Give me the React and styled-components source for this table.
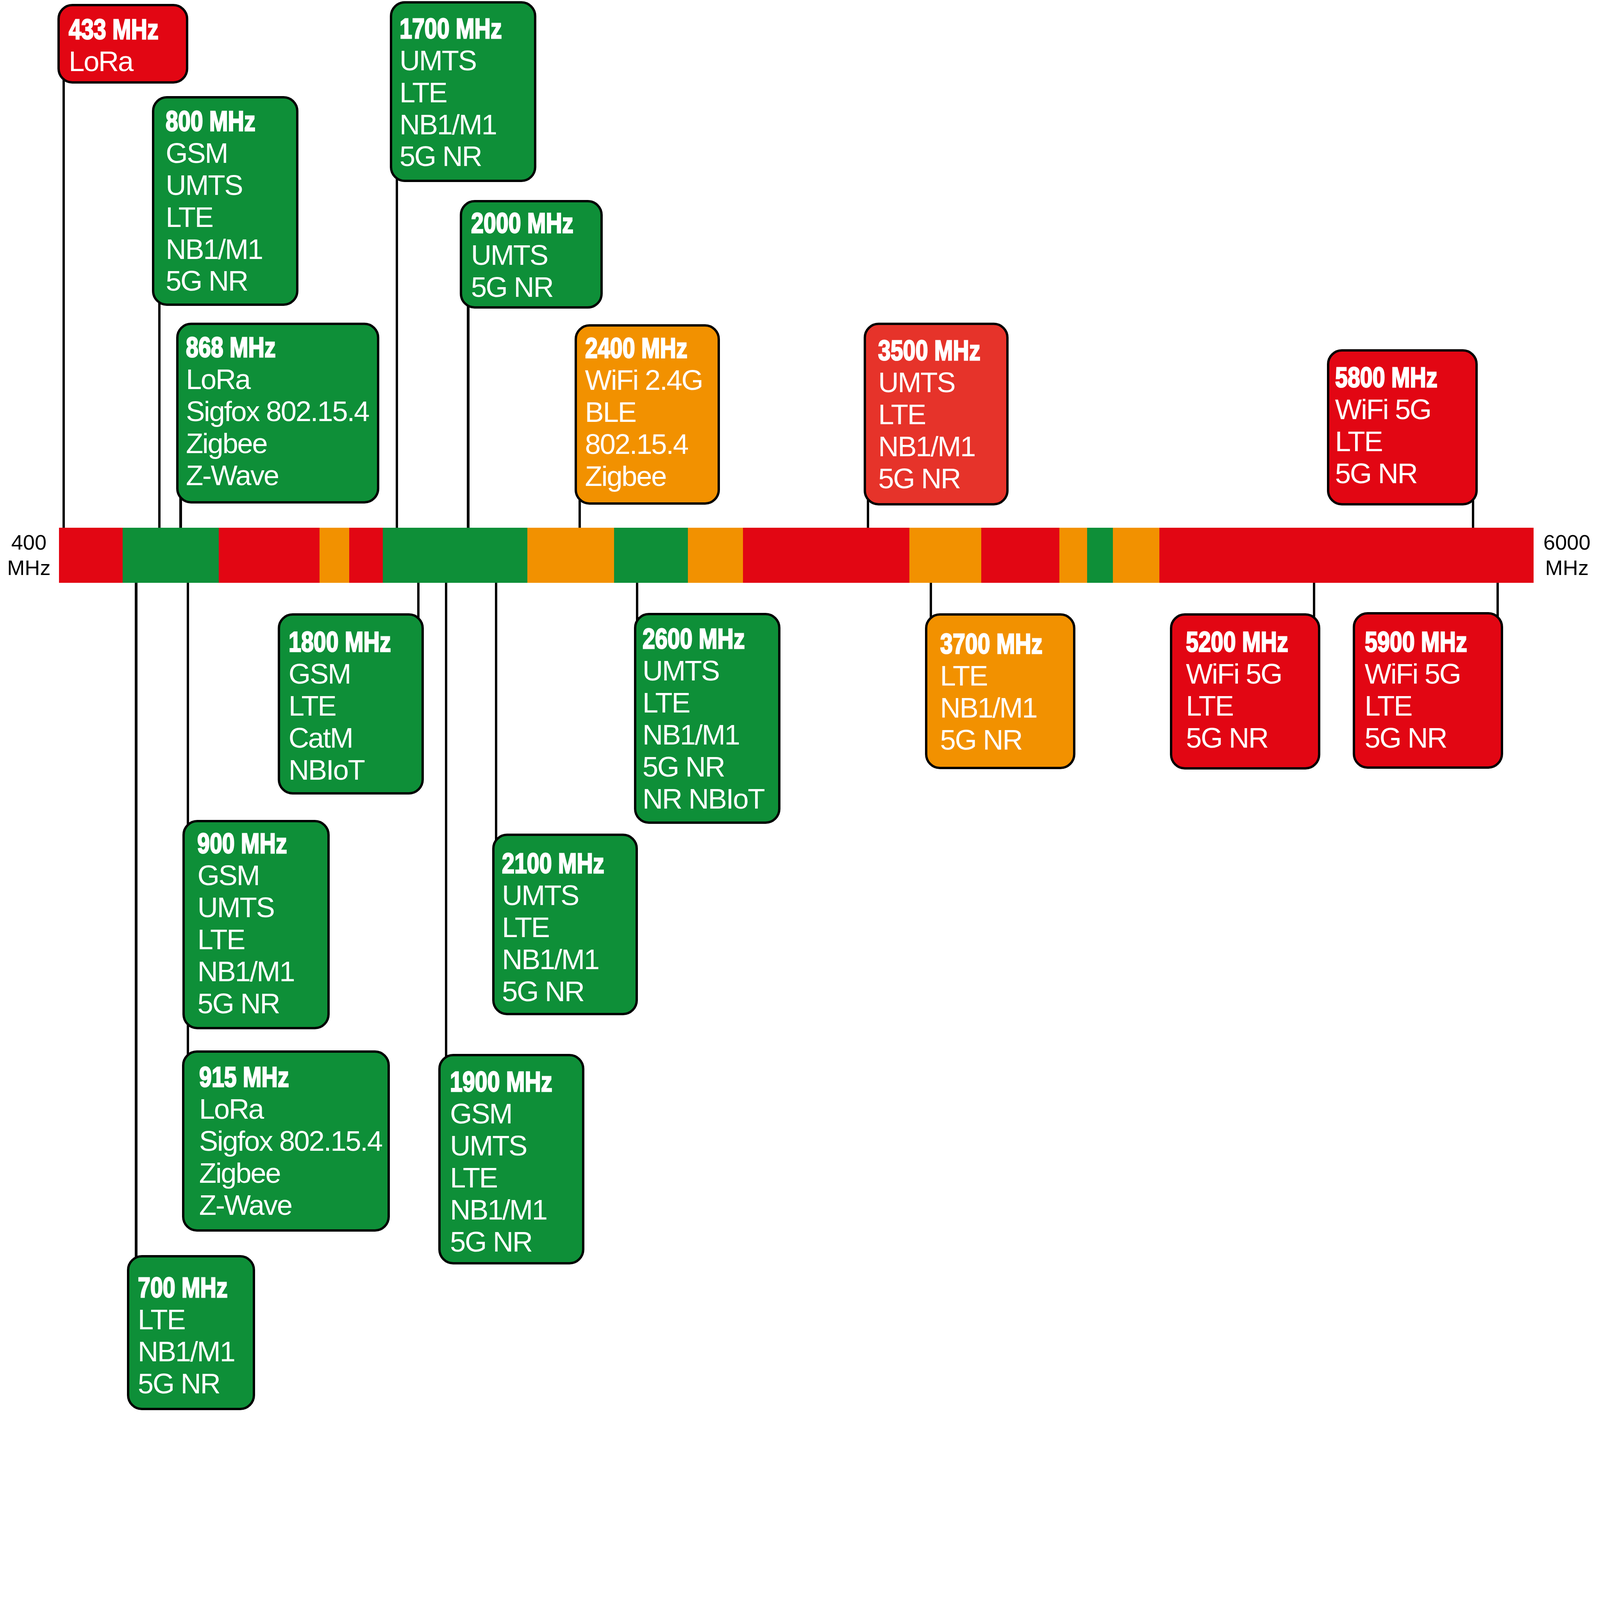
import React from 'react';
import styled, { createGlobalStyle } from 'styled-components';

// the chart is drawn on a 6651-unit wide canvas that scales with the window
const px = (n) => `calc(${n} * 100vw / 6651)`;

const COLORS = {
  red: '#e20613',
  coral: '#e6332a',
  green: '#0e8f38',
  orange: '#f29100',
};

const GlobalStyle = createGlobalStyle`
  html, body {
    margin: 0;
    padding: 0;
    background: #fff;
    overflow: hidden;
  }
`;

const Chart = styled.div`
  position: relative;
  width: 100vw;
  height: ${px(5867)};
  overflow: hidden;
  background: #fff;
  font-family: "Liberation Sans", Arial, sans-serif;
`;

const Axis = styled.div`
  position: absolute;
  left: 0;
  top: ${px(2193)};
  display: flex;
  align-items: center;
  z-index: 2;
`;

const AxisLabel = styled.div`
  width: ${(p) => px(p.$w)};
  margin-right: ${(p) => px(p.$gap || 0)};
  text-align: center;
  font-size: ${px(88)};
  line-height: ${px(106)};
  color: #000;
`;

const Bar = styled.div`
  display: flex;
  width: ${px(6130)};
  height: ${px(229)};
`;

const Band = styled.div`
  flex: 0 0 ${(p) => px(p.$w)};
  background: ${(p) => COLORS[p.$c]};
`;

const Connector = styled.div`
  position: absolute;
  left: ${(p) => px(p.$x - 5)};
  top: ${(p) => px(p.$y1)};
  width: ${px(10)};
  height: ${(p) => px(p.$y2 - p.$y1)};
  background: #000;
  z-index: 1;
`;

const Card = styled.div`
  position: absolute;
  left: ${(p) => px(p.$x)};
  top: ${(p) => px(p.$y)};
  width: ${(p) => px(p.$w)};
  height: ${(p) => px(p.$h)};
  box-sizing: border-box;
  padding: ${(p) => px(p.$pt)} 0 0 ${(p) => px(p.$pl)};
  border: ${px(10)} solid #000;
  border-radius: ${px(62)};
  background: ${(p) => COLORS[p.$c]};
  color: #fff;
  z-index: 3;
  display: flex;
  flex-direction: column;
  align-items: flex-start;
`;

const Freq = styled.div`
  font-weight: 700;
  font-size: ${px(118)};
  line-height: ${px(133)};
  white-space: nowrap;
  -webkit-text-stroke: ${px(5)} #fff;
  transform: scaleX(0.79);
  transform-origin: left center;
`;

const Tech = styled.div`
  font-size: ${px(118)};
  line-height: ${px(133)};
  letter-spacing: ${px(-4)};
  white-space: nowrap;
`;

const bands = [
  [246, 510, 'red'], [510, 910, 'green'], [910, 1328, 'red'], [1328, 1452, 'orange'],
  [1452, 1592, 'red'], [1592, 2192, 'green'], [2192, 2553, 'orange'], [2553, 2860, 'green'],
  [2860, 3089, 'orange'], [3089, 3781, 'red'], [3781, 4079, 'orange'], [4079, 4404, 'red'],
  [4404, 4519, 'orange'], [4519, 4627, 'green'], [4627, 4820, 'orange'], [4820, 6376, 'red'],
];

// x, y1, y2
const connectors = [
  [265, 200, 2193], [662, 800, 2193], [751, 1700, 2193], [1650, 400, 2193],
  [1946, 1100, 2193], [2410, 1700, 2193], [3608, 1700, 2193], [6123, 1800, 2193],
  [566, 2422, 5400], [781, 2422, 4500], [1739, 2422, 2700], [1855, 2422, 4500],
  [2062, 2422, 3600], [2648, 2422, 2700], [3869, 2422, 2700], [5463, 2422, 2700],
  [6226, 2422, 2700],
];

const cards = [
  { f: '433 MHz', t: ['LoRa'], c: 'red', x: 239, y: 16, w: 543, h: 331, pl: 37, pt: 29 },
  { f: '800 MHz', t: ['GSM', 'UMTS', 'LTE', 'NB1/M1', '5G NR'], c: 'green', x: 631, y: 399, w: 609, h: 873, pl: 48, pt: 28 },
  { f: '868 MHz', t: ['LoRa', 'Sigfox 802.15.4', 'Zigbee', 'Z-Wave'], c: 'green', x: 733, y: 1342, w: 844, h: 751, pl: 30, pt: 26 },
  { f: '1700 MHz', t: ['UMTS', 'LTE', 'NB1/M1', '5G NR'], c: 'green', x: 1620, y: 5, w: 609, h: 752, pl: 31, pt: 37 },
  { f: '2000 MHz', t: ['UMTS', '5G NR'], c: 'green', x: 1911, y: 832, w: 595, h: 450, pl: 37, pt: 19 },
  { f: '2400 MHz', t: ['WiFi 2.4G', 'BLE', '802.15.4', 'Zigbee'], c: 'orange', x: 2388, y: 1347, w: 605, h: 751, pl: 34, pt: 24 },
  { f: '3500 MHz', t: ['UMTS', 'LTE', 'NB1/M1', '5G NR'], c: 'coral', x: 3590, y: 1342, w: 603, h: 759, pl: 51, pt: 39 },
  { f: '5800 MHz', t: ['WiFi 5G', 'LTE', '5G NR'], c: 'red', x: 5516, y: 1451, w: 627, h: 650, pl: 24, pt: 41 },
  { f: '1800 MHz', t: ['GSM', 'LTE', 'CatM', 'NBIoT'], c: 'green', x: 1155, y: 2549, w: 606, h: 754, pl: 35, pt: 43 },
  { f: '2600 MHz', t: ['UMTS', 'LTE', 'NB1/M1', '5G NR', 'NR NBIoT'], c: 'green', x: 2636, y: 2547, w: 609, h: 877, pl: 25, pt: 32 },
  { f: '3700 MHz', t: ['LTE', 'NB1/M1', '5G NR'], c: 'orange', x: 3845, y: 2549, w: 626, h: 648, pl: 53, pt: 51 },
  { f: '5200 MHz', t: ['WiFi 5G', 'LTE', '5G NR'], c: 'red', x: 4864, y: 2549, w: 625, h: 650, pl: 56, pt: 43 },
  { f: '5900 MHz', t: ['WiFi 5G', 'LTE', '5G NR'], c: 'red', x: 5623, y: 2545, w: 625, h: 650, pl: 40, pt: 47 },
  { f: '900 MHz', t: ['GSM', 'UMTS', 'LTE', 'NB1/M1', '5G NR'], c: 'green', x: 759, y: 3408, w: 611, h: 871, pl: 52, pt: 22 },
  { f: '2100 MHz', t: ['UMTS', 'LTE', 'NB1/M1', '5G NR'], c: 'green', x: 2046, y: 3465, w: 606, h: 756, pl: 31, pt: 48 },
  { f: '915 MHz', t: ['LoRa', 'Sigfox 802.15.4', 'Zigbee', 'Z-Wave'], c: 'green', x: 756, y: 4366, w: 865, h: 754, pl: 62, pt: 35 },
  { f: '1900 MHz', t: ['GSM', 'UMTS', 'LTE', 'NB1/M1', '5G NR'], c: 'green', x: 1822, y: 4381, w: 607, h: 875, pl: 39, pt: 39 },
  { f: '700 MHz', t: ['LTE', 'NB1/M1', '5G NR'], c: 'green', x: 528, y: 5217, w: 532, h: 645, pl: 35, pt: 59 },
];

export default function App() {
  return (
    <>
      <GlobalStyle />
      <Chart>
        {connectors.map(([x, y1, y2], i) => (
          <Connector key={i} $x={x} $y1={y1} $y2={y2} />
        ))}
        <Axis>
          <AxisLabel $w={240} $gap={6}>400<br />MHz</AxisLabel>
          <Bar>
            {bands.map(([a, b, c], i) => (
              <Band key={i} $w={b - a} $c={c} />
            ))}
          </Bar>
          <AxisLabel $w={275}>6000<br />MHz</AxisLabel>
        </Axis>
        {cards.map((card) => (
          <Card key={card.f} $x={card.x} $y={card.y} $w={card.w} $h={card.h} $pl={card.pl} $pt={card.pt} $c={card.c}>
            <Freq>{card.f}</Freq>
            {card.t.map((line) => (
              <Tech key={line}>{line}</Tech>
            ))}
          </Card>
        ))}
      </Chart>
    </>
  );
}
